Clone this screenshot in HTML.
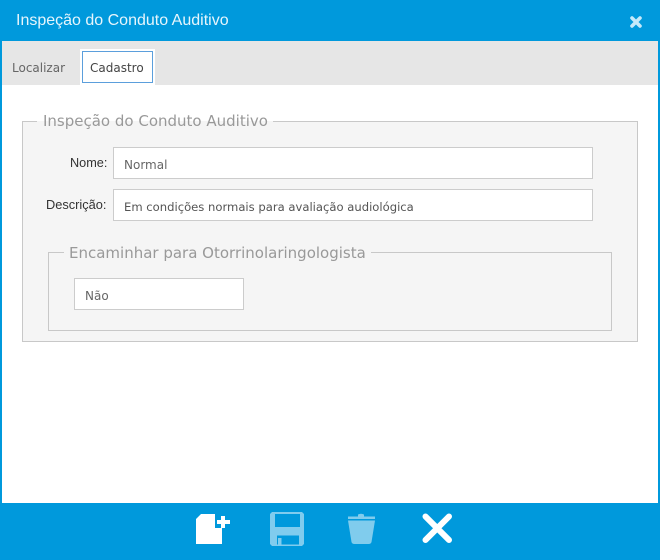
<!DOCTYPE html>
<html lang="pt"><head><meta charset="utf-8"><title>Inspeção do Conduto Auditivo</title>
<style>
html,body{margin:0;padding:0}
body{width:660px;height:560px;position:relative;overflow:hidden;background:#fff;font-family:"DejaVu Sans","Liberation Sans",sans-serif}
div,span{position:absolute;box-sizing:border-box;white-space:nowrap}
.input{background:#fff;border:1px solid #ccc}
.t{line-height:20px}
</style></head><body>
<div style="left:0;top:0;width:660px;height:41px;background:#0099dc"></div>
<span class="t" style="left:16px;top:11px;font:16px/20px 'Liberation Sans',sans-serif;color:#e6f5fc">Inspeção do Conduto Auditivo</span>
<svg style="position:absolute;left:630px;top:16px" width="12" height="12" viewBox="0 0 12 12"><path d="M2 2L10 10M10 2L2 10" stroke="#c4e9fa" stroke-width="3.6" stroke-linecap="round"/></svg>
<div style="left:0;top:41px;width:2px;height:462px;background:#0099dc"></div>
<div style="left:658px;top:41px;width:2px;height:462px;background:#0099dc"></div>
<div style="left:2px;top:41px;width:656px;height:44px;background:#e6e6e6"></div>
<span class="t" style="left:12px;top:58px;font-size:12px;color:#666">Localizar</span>
<div style="left:80px;top:49px;width:75px;height:36px;background:#fff"></div>
<div style="left:82px;top:51px;width:71px;height:32px;border:1px solid #5b9fdc"></div>
<span class="t" style="left:90px;top:58px;font-size:12px;color:#444">Cadastro</span>

<div style="left:22px;top:121px;width:616px;height:221px;background:#f5f5f5;border:1px solid #c8c8c8"></div>
<div style="left:37px;top:112px;width:236px;height:9px;background:#fff"></div>
<div style="left:37px;top:121px;width:236px;height:1px;background:#f5f5f5"></div>
<span class="t" style="left:43px;top:111px;font-size:15px;color:#999">Inspeção do Conduto Auditivo</span>

<span class="t" style="left:70px;top:153px;font:12.7px/20px 'Liberation Sans',sans-serif;color:#333">Nome:</span>
<div class="input" style="left:113px;top:147px;width:480px;height:32px"></div>
<span class="t" style="left:124px;top:155px;font-size:12px;color:#666">Normal</span>
<span class="t" style="left:46px;top:195px;font:12.8px/20px 'Liberation Sans',sans-serif;color:#333">Descrição:</span>
<div class="input" style="left:113px;top:189px;width:480px;height:32px"></div>
<span class="t" style="left:124px;top:197px;font-size:11.6px;color:#555">Em condições normais para avaliação audiológica</span>

<div style="left:48px;top:252px;width:564px;height:79px;border:1px solid #c8c8c8"></div>
<div style="left:64px;top:250px;width:307px;height:4px;background:#f5f5f5"></div>
<span class="t" style="left:69px;top:243px;font-size:15px;color:#999">Encaminhar para Otorrinolaringologista</span>
<div class="input" style="left:74px;top:278px;width:170px;height:32px"></div>
<span class="t" style="left:85px;top:286px;font-size:12px;color:#666">Não</span>

<div style="left:0;top:503px;width:660px;height:57px;background:#0099dc"></div>
<svg style="position:absolute;left:0;top:503px" width="660" height="57" viewBox="0 503 660 57">
<path d="M201 514H215V528H222V544H196V519Z" fill="#fff"/>
<path d="M221 516H225V520H230V524H225V528H221V524H217V520H221Z" fill="#fff"/>
<path fill-rule="evenodd" opacity=".5" d="M272 512H302L304 514V544L302 546H272L270 544V514ZM275 514V527H300V514ZM277 535.500V544.500H278V538H281.500V544.500H299V535.500Z" fill="#fff"/>
<g fill="#fff" opacity=".5"><path d="M348 516.500H358V514.500Q361 513 364 514.500V516.500H375V519H348Z"/><path d="M348 520.500H375L371.500 542Q371 544 368.500 544H354.500Q352 544 351.500 542Z"/></g>
<path d="M425.500 516.500L449 540M449 516.500L425.500 540" stroke="#fff" stroke-width="6" stroke-linecap="round" fill="none"/>
</svg>
</body></html>
